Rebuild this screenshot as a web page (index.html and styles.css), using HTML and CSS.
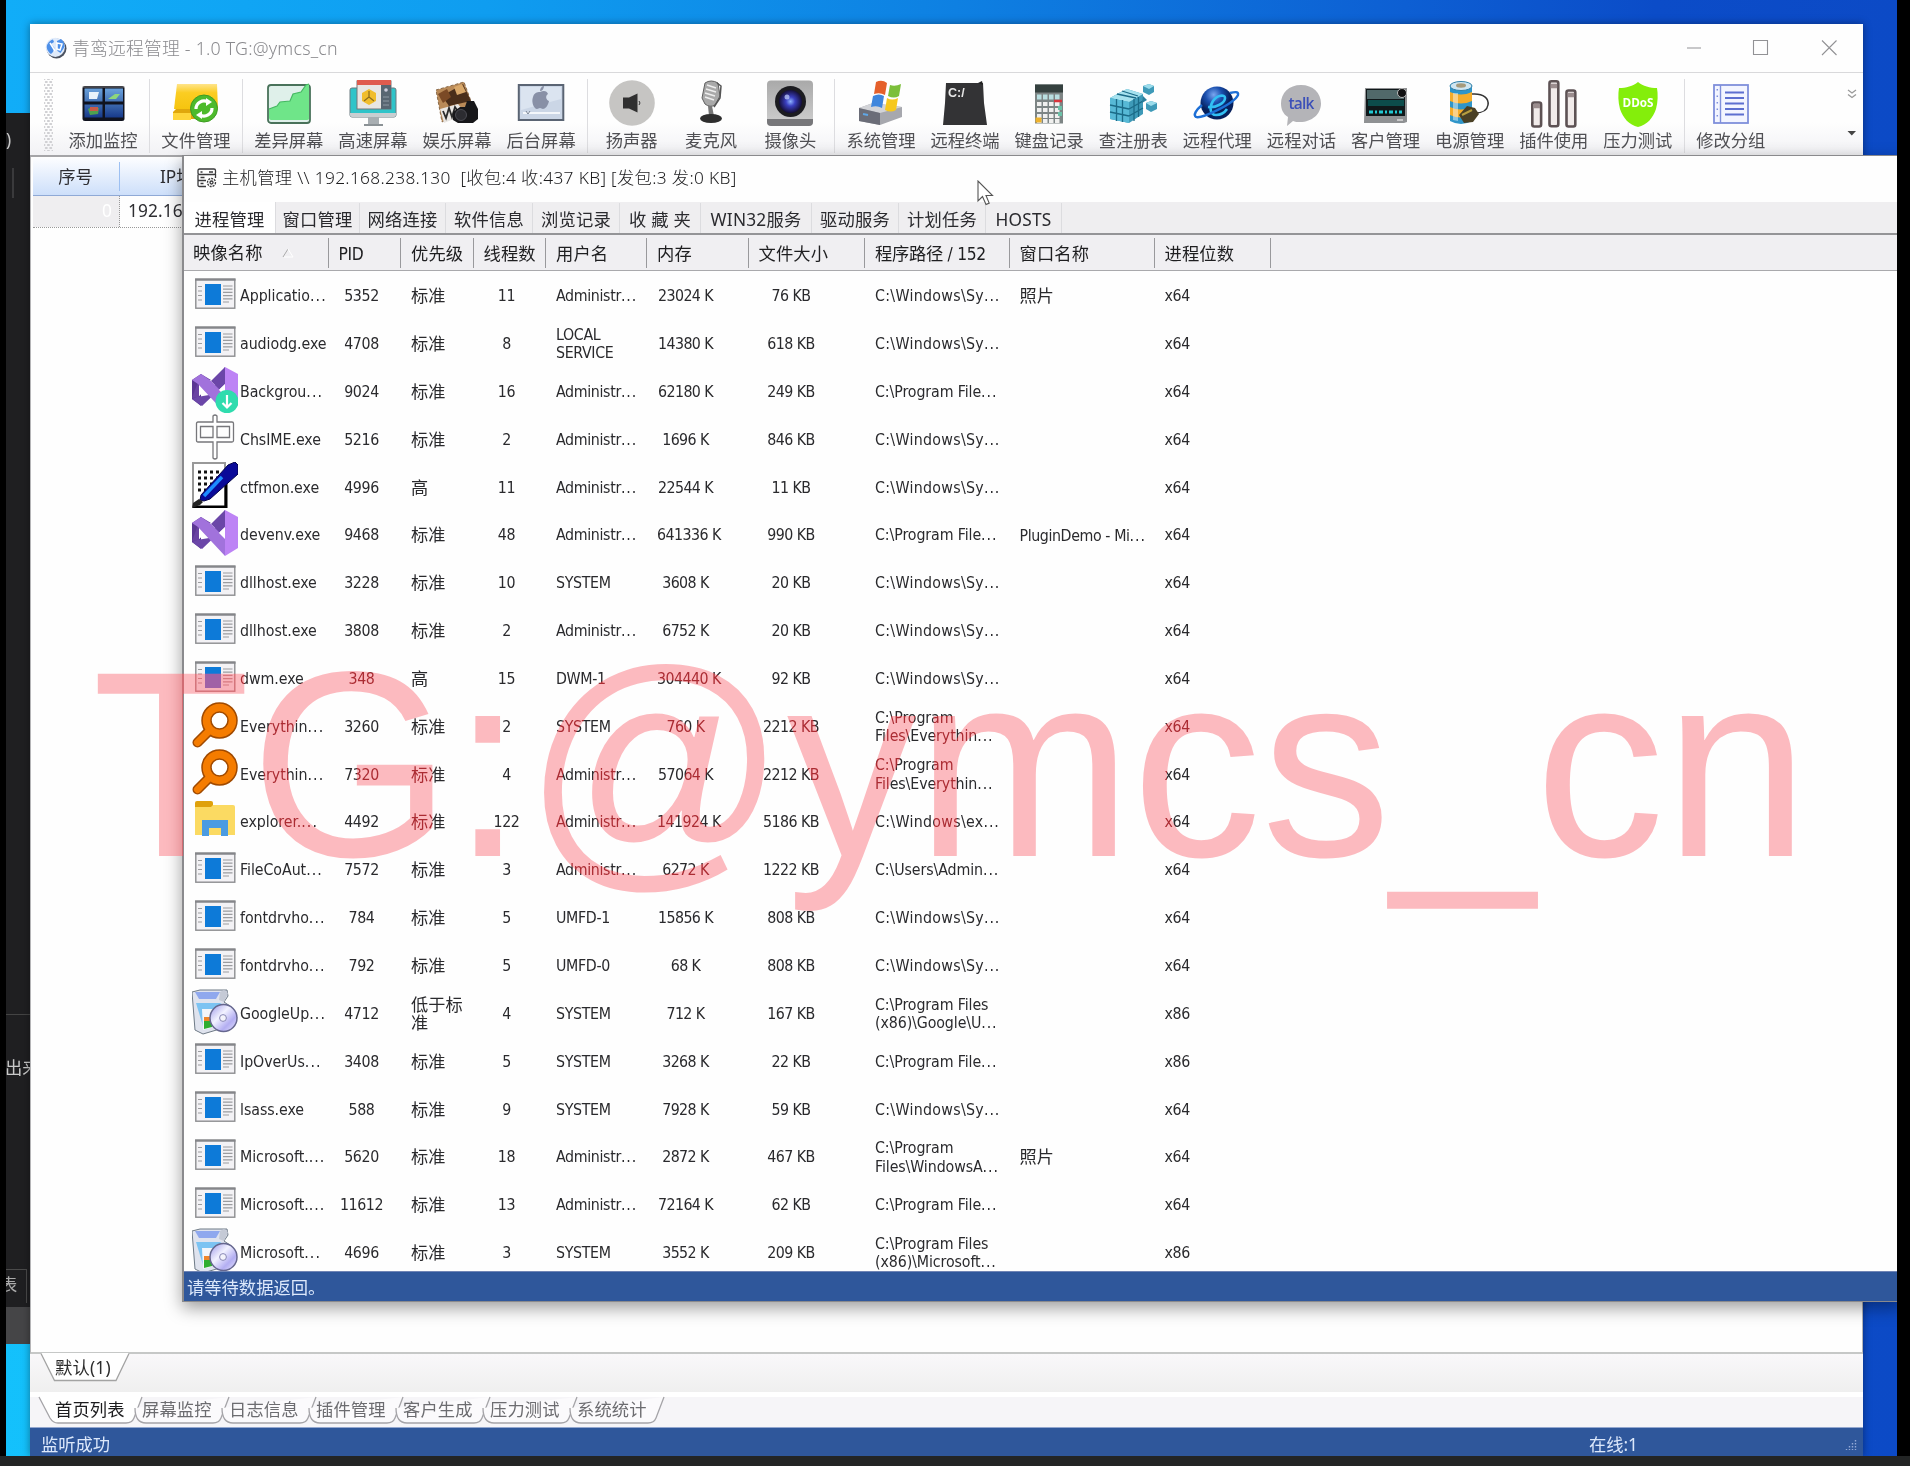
FILE: index.html
```html
<!DOCTYPE html>
<html lang="zh-CN">
<head>
<meta charset="utf-8">
<title>青鸾远程管理</title>
<link rel="stylesheet" href="styles.css">
</head>
<body>
<svg class="defs" width="0" height="0">
  <defs>
    <linearGradient id="gFolder" x1="0" y1="0" x2="0" y2="1"><stop offset="0" stop-color="#ffe48a"/><stop offset=".35" stop-color="#fbcd22"/><stop offset="1" stop-color="#f6c40f"/></linearGradient>
    <linearGradient id="gGray" x1="0" y1="0" x2="0" y2="1"><stop offset="0" stop-color="#a9a9a9"/><stop offset="1" stop-color="#cfcfcf"/></linearGradient>
    <linearGradient id="gPane" x1="0" y1="0" x2="0" y2="1"><stop offset="0" stop-color="#6aa2dc"/><stop offset="1" stop-color="#173a8a"/></linearGradient>
    <radialGradient id="gLens"><stop offset="0" stop-color="#8fb4ff"/><stop offset=".4" stop-color="#3a3fc0"/><stop offset="1" stop-color="#150f38"/></radialGradient>
    <radialGradient id="gGlobe" cx=".4" cy=".25"><stop offset="0" stop-color="#7aa7f0"/><stop offset=".5" stop-color="#1a4fae"/><stop offset="1" stop-color="#06205c"/></radialGradient>
    <linearGradient id="gDisc" x1="0" y1="0" x2="1" y2="1"><stop offset="0" stop-color="#9a94e8"/><stop offset=".4" stop-color="#f2f2ff"/><stop offset=".7" stop-color="#b3aef2"/><stop offset="1" stop-color="#e8e6ff"/></linearGradient>
    <symbol id="app" viewBox="0 0 46 46">
      <rect x="3.800" y="8.200" width="39" height="29" fill="#f3f2f5" stroke="#8c8d90" stroke-width="1.400"/>
      <path d="M3 8.600h40.500" stroke="#85868a" stroke-width="2.400"/>
      <rect x="13" y="13" width="16" height="21" fill="#0d7ad8"/>
      <path d="M6 15.500h4M6 20h4M6 24.500h4M6 29h4M31 15h9.500M31 18.200h9.500M31 21.400h9.500M31 24.600h9.500M31 27.800h9.500M31 31h6" stroke="#9b9c9f" stroke-width="1.200"/>
    </symbol>
    <symbol id="vs" viewBox="0 0 46 46">
      <path d="M0 13l9-6v32l-9-7z" fill="#5b3694"/>
      <path d="M9 7L19 13 7 17v13L0 31z" fill="#6a42a3"/>
      <path d="M7 17v12l6-6z" fill="#fff"/>
      <path d="M17 28L33 0v17L10 39 0 32l5-2z" fill="#6b46a8"/>
      <path d="M7 17v12l6-6z" fill="#fff"/>
      <path d="M19 14L33 0v17l-6 5z" fill="#6b46a8"/>
      <path d="M9 7l10 7 14 14v18L6 17l-6-4z" fill="#a172dc"/>
      <path d="M33 0l13 7v31l-13 8z" fill="#bd83f5"/>
      <path d="M33 17v12l-6-6z" fill="#fff"/>
    </symbol>
    <symbol id="vsdl" viewBox="0 0 46 46">
      <use href="#vs"/><circle cx="35" cy="34.500" r="11.500" fill="#2fdcae"/>
      <path d="M35 28v12M30.500 36l4.500 4.500 4.500-4.500" fill="none" stroke="#fff" stroke-width="2.200"/>
    </symbol>
    <symbol id="ime" viewBox="0 0 46 46">
      <path d="M21 2q2-2 4 0v6h15q1.500 0 1.500 1.500v17q0 1.500-1.500 1.500H25v16q-2 2-4 0V28H6q-1.500 0-1.500-1.500v-17Q4.500 8 6 8h15zM8.500 12.500v11H21v-11zM25 12.500v11h12.500v-11z" fill="#fff" stroke="#77777b" stroke-width="1.300" fill-rule="evenodd"/>
    </symbol>
    <symbol id="ctf" viewBox="0 0 46 46">
      <path d="M1 1h32v44H1z" fill="#fff" stroke="#999" stroke-width="2"/>
      <path d="M1 45h33V8" fill="none" stroke="#000" stroke-width="3"/>
      <path d="M6 10h22M6 16h20M6 22h14M6 28h8" stroke="#111" stroke-width="3" stroke-dasharray="3 3"/>
      <path d="M8 38L9 33 36 3l7-3 3 3v9L18 37l-6 2z" fill="#0a0a98" stroke="#04044a" stroke-width="1"/>
      <path d="M12 34L30 15" stroke="#1d8dff" stroke-width="3.500"/>
      <path d="M0 46l1-5 6-4 4 3-3 3z" fill="#222"/>
    </symbol>
    <symbol id="find" viewBox="0 0 46 46">
      <path d="M5.500 40.500L18 28" stroke="#a04a00" stroke-width="10" stroke-linecap="round"/>
      <circle cx="27.500" cy="18.500" r="13" fill="#fff" stroke="#a04a00" stroke-width="10.500"/>
      <path d="M5.500 40.500L18 28" stroke="#f57c00" stroke-width="7" stroke-linecap="round"/>
      <circle cx="27.500" cy="18.500" r="13" fill="none" stroke="#f57c00" stroke-width="7.500"/>
    </symbol>
    <symbol id="folder" viewBox="0 0 46 46">
      <path d="M3 8h38q2 0 2 2v28H3z" fill="#fbda62"/><path d="M3 6q0-2 2-2h14q2 0 2 2v2l-2 2H3z" fill="#dfa10c"/>
      <path d="M10 23h26v16h-7v-8H17v8h-7z" fill="#4a9be2"/>
    </symbol>
    <symbol id="setup" viewBox="0 0 46 46">
      <path d="M0 3l8-2h27l1 6-4 6 6 4v20L11 45 3 41z" fill="#dfe3ee" stroke="#6e7a86" stroke-width="1"/>
      <path d="M3 3h25l-4 7H7z" fill="#8fa8ee"/><path d="M28 3l4-2 4 3-4 9-5-2z" fill="#c5cad6"/>
      <path d="M4 14h24l5 3v20H11z" fill="#7cc3f2"/><path d="M10 20h12v18l-11 3z" fill="#f4f6fa"/>
      <path d="M12 28h8v10l-8 2z" fill="#2fae2f"/><path d="M12 28h8v4h-8z" fill="#f0862a"/>
      <circle cx="31.500" cy="29" r="13.500" fill="url(#gDisc)" stroke="#66678f" stroke-width="1.500"/>
      <circle cx="31" cy="29" r="3.400" fill="#f3f3fb" stroke="#8887b5"/>
    </symbol>
  </defs>
</svg>

<div class="desktop">
  <aside class="behind">
    <span class="b-paren">)</span>
    <i class="b-bar"></i>
    <span class="b-text">出来</span>
    <span class="b-tab">表</span>
    <i class="b-foot"></i>
  </aside>

  <section class="main-win">
    <header class="titlebar">
      <svg width="22" height="22" viewBox="0 0 22 22"><circle cx="11.500" cy="11.500" r="10" fill="#4b5260"/><circle cx="10.300" cy="10.300" r="9.600" fill="#dfeafa"/><path d="M2 8c2-4 4-5 6-5.500l1 2.500-3 2 3.500 4-1.500 4-2 2c-3-2-5-6-4-9zM12 4l4-2c3 2 3.500 5 3.500 8l-4 6-3-2-.5-4z" fill="#4d8fe8"/><path d="M5 6l5 8M12 6l5 1-2 6-3-1z" fill="none" stroke="#fff" stroke-width="1.500"/></svg>
      <h1>青鸾远程管理 - 1.0 TG:@ymcs_cn</h1>
      <svg class="winbtns" width="160" height="20" viewBox="0 0 160 20"><path d="M4 10h14M70.500 2.500h14v14h-14zM139 2.500l14.500 14.500M153.500 2.500L139 17" fill="none" stroke="#929295" stroke-width="1.100"/></svg>
    </header>

    <nav class="toolbar">
      <i class="grip"></i>
      <div class="tool"><svg viewBox="0 0 46 46"><rect x="2.500" y="6" width="42" height="35" rx="2.500" fill="#10131f"/><path d="M2.500 7h42" stroke="#777" stroke-width="1"/><path d="M4.500 8.500h18v13h-18zM25 8.500h18v13H25zM4.500 24.500h18v13h-18zM25 24.500h18v13H25z" fill="url(#gPane)"/><path d="M9 12h10l-2 7H9z" fill="#e8f2fb"/><path d="M28 19l7-5 5 0-4 5z" fill="#8ed67c"/><path d="M8 29l4-2 7 1-1 6-8 1z" fill="#4fa04e"/><path d="M10 27h8v4h-8z" fill="#c85b48"/></svg>添加监控</div>
      <i class="sep"></i>
      <div class="tool"><svg viewBox="0 0 46 46"><path d="M4 4h40l1 25H1z" fill="url(#gFolder)"/><path d="M0 32l3-3h26v10H0z" fill="#e0a70c"/><path d="M0 33h18v7H0z" fill="#ffd53a"/><circle cx="31" cy="28.500" r="13.500" fill="#4dba2c" stroke="#3d9c22"/><path d="M23 29a8 8 0 0 1 12-7M39 28a8 8 0 0 1-12 7" fill="none" stroke="#fff" stroke-width="3.200"/><path d="M33 18l6 4-6 4zM29 31l-6 4 6 4z" fill="#fff"/></svg>文件管理</div>
      <i class="sep"></i>
      <div class="tool"><svg viewBox="0 0 46 46"><rect x="2" y="5" width="42" height="38" rx="3" fill="#dff0ea" stroke="#49725a" stroke-width="1.800"/><path d="M3 29l8-3 3-4 10-1 3-7 8-2 5-7 3-1v35q0 1-2 1H5q-2 0-2-2z" fill="#6fe589"/><path d="M3 29l8-3 3-4 10-1 3-7 8-2 5-7 3-1" fill="none" stroke="#46b963" stroke-width="1.200"/></svg>差异屏幕</div>
      <div class="tool"><svg viewBox="0 0 46 46"><rect x="0" y="8" width="46" height="29" rx="2" fill="#2fc4c9" stroke="#6b7b80"/><path d="M0 33h46v2q0 2-2 2H2q-2 0-2-2z" fill="#c9ced1"/><path d="M18 37h11v7H18z" fill="#a8aeb2"/><path d="M14 45h19" stroke="#8b9296" stroke-width="2"/><rect x="7" y="1" width="34" height="28" fill="#e8e6e3" stroke="#72767a"/><rect x="7" y="0" width="34" height="5" fill="#df5b4e"/><path d="M31 5h10v24H31z" fill="#586672"/><circle cx="36" cy="10" r="1.800" fill="#ccd"/><path d="M33 17h6M33 21h6M33 25h6" stroke="#8d99a3"/><path d="M19 9l7 4v8l-7 4-7-4v-8z" fill="#f0bd2d"/><path d="M19 11v6l-5 4M19 17l5 4" fill="none" stroke="#8b6c1c" stroke-width="1.200"/></svg>高速屏幕</div>
      <div class="tool"><svg viewBox="0 0 46 46"><path d="M2 10l28-8 8 22-30 18z" fill="#b98a58" stroke="#8a6a4a" stroke-width="1" stroke-dasharray="3 2"/><path d="M8 16l21-12 8 17-22 5z" fill="#4a2e1a"/><path d="M20 7l8-3 4 8-9 3z" fill="#d9a86a"/><path d="M4 14l9-5 4 8-8 6z" fill="#7b4a26"/><path d="M6 29l18-5 8 10-22 9z" fill="#e9e6e2"/><path d="M9 31l3 7 3-10 3 9 3-10 4 6" fill="none" stroke="#2a2a2a" stroke-width="1.800"/><path d="M19 32l7-5h5l2-6h7l4 8v10l-5 4H24l-5-3z" fill="#17171a"/><circle cx="27" cy="35" r="5.500" fill="#2c2c31" stroke="#4b4b52"/></svg>娱乐屏幕</div>
      <div class="tool"><svg viewBox="0 0 46 46"><rect x="0.800" y="5" width="44.500" height="35" fill="#cbd6e6" stroke="#5a6473" stroke-width="2"/><path d="M3 7h40v12L3 30z" fill="#dbe4f0"/><path d="M22 12c4-2 7-1 8 2-3 2-2 6 1 7-1 5-4 8-6 8l-3-1-3 1c-3 0-6-7-4-12 1-4 4-5 7-5zM22 11c0-3 2-5 4-5 0 3-2 5-4 5z" fill="#8890a6"/><path d="M5 33h37" stroke="#f4f7fb" stroke-width="2"/><path d="M8 31l2 3 2-3" fill="none" stroke="#7a8494"/></svg>后台屏幕</div>
      <i class="sep"></i>
      <div class="tool narrow"><svg viewBox="0 0 46 46"><circle cx="23" cy="23" r="22.800" fill="#c6c5c3"/><path d="M14 17.500h6l8.500-4v19l-8.500-4h-6z" fill="#303030"/><path d="M30 21q2 2 0 4" stroke="#333" fill="none"/></svg>扬声器</div>
      <div class="tool narrow"><svg viewBox="0 0 46 46"><path d="M17 3q6-4 13 0l2 13-5 9q-5 3-10-1l-3-6z" fill="#a9a9a9" stroke="#5f5f5f"/><path d="M19 5l9 3M18 9l10 3M17 13l10 3M17 17l9 3" stroke="#eee" stroke-width="1.500"/><path d="M29 3l4 3-1 12-6 9" stroke="#555" fill="none" stroke-width="1.500"/><path d="M20 26h4l2 10h-5z" fill="#777"/><ellipse cx="23" cy="38.500" rx="11" ry="4.500" fill="#2e2e2e"/></svg>麦克风</div>
      <div class="tool narrow"><svg viewBox="0 0 46 46"><rect x="0" y="0.500" width="46" height="45" rx="4" fill="url(#gGray)"/><path d="M0 39h46v3q0 4-4 4H4q-4 0-4-4z" fill="#77777a"/><circle cx="23.500" cy="21.500" r="15.500" fill="#1c1c20"/><circle cx="23.500" cy="21.500" r="11.500" fill="url(#gLens)"/><circle cx="20" cy="17" r="2.500" fill="#c8d6ff" opacity=".7"/></svg>摄像头</div>
      <i class="sep"></i>
      <div class="tool"><svg viewBox="0 0 46 46"><path d="M1 28l14-5 29 4v10L22 45 1 41z" fill="#a7a8ae"/><path d="M1 28l14-5 29 4-22 6z" fill="#d3d4d8"/><path d="M1 28l21 5v12L1 41z" fill="#6b6d78"/><path d="M5 34l5 1" stroke="#5fa7e6" stroke-width="2"/><path d="M18 2q6-3 11 1l-2 12q-5-3-11-1z" fill="#e5602b"/><path d="M32 5q5 2 11-1l-2 12q-5 3-11 0z" fill="#7cbf3a"/><path d="M15 16q6-3 11 0l-2 12q-5-3-11-1z" fill="#3f86dd"/><path d="M29 18q5 3 11 0l-2 12q-5 3-11 0z" fill="#f6c81e"/></svg>系统管理</div>
      <div class="tool"><svg viewBox="0 0 46 46"><path d="M4 3h37l1 20 3 22H1l2-22z" fill="#333335"/><path d="M36 3l4-2 1 4z" fill="#222"/><text x="6" y="17" font-family="Liberation Sans, sans-serif" font-weight="bold" font-size="12.500" fill="#e8e8e8">C:/</text></svg>远程终端</div>
      <div class="tool"><svg viewBox="0 0 46 46"><rect x="9" y="4.500" width="28" height="39" fill="#7d8585"/><rect x="9" y="4.500" width="28" height="8" fill="#35413f"/><path d="M11 17h24" stroke="#b9dfe1" stroke-width="5" stroke-dasharray="4.500 1.500"/><path d="M11 24h24M11 30h24M11 36h24M11 41h24" stroke="#f0f0ef" stroke-width="4" stroke-dasharray="4.500 1.500"/><path d="M28 21h8" stroke="#d8343c" stroke-width="2.500"/><path d="M32 28h4M32 34h4" stroke="#6cc1a8" stroke-width="4"/><path d="M9.500 40h6" stroke="#efb22c" stroke-width="5"/></svg>键盘记录</div>
      <div class="tool"><svg viewBox="0 0 46 46"><path d="M0 18l9-5 8-4 16 5v20l-14 9-19-4z" fill="#3e9ab8"/><path d="M0 18l9-5 8-4 16 5-14 8z" fill="#a5e2ef"/><path d="M0 18l19 4v21L0 39z" fill="#57b9d6"/><path d="M6.500 19v22M12.500 20v22M0 25l19 4M0 32l19 4M24 19v22M28.500 17v20M19 29l14-8M19 36l14-8M7 14l19 4M12 11l16 5" stroke="#1b6b88" stroke-width="1.300"/><path d="M33 6l6-2 5 2v6l-5 3-6-3zM36 23l5-2 6 2v6l-6 3-5-3z" fill="#3e9ab8"/><path d="M33 6l6-2 5 2-5 3zM36 23l5-2 6 2-6 3z" fill="#9bdcec"/><path d="M33 16l4 4-5 3z" fill="#2b7f9d"/></svg>查注册表</div>
      <div class="tool"><svg viewBox="0 0 46 46"><circle cx="23" cy="23" r="16.500" fill="url(#gGlobe)"/><path d="M14 27c8 1 17-4 17-9 0-4-8-3-12 3s-3 14 3 14 9-3 11-6" fill="none" stroke="#32c0f4" stroke-width="2.600"/><path d="M8 25c-6 5-9 10-6 12 5 2 38-13 42-22 1-4-4-3-8-2" fill="none" stroke="#1d6fd6" stroke-width="2.400"/></svg>远程代理</div>
      <div class="tool"><svg viewBox="0 0 46 46"><path d="M23 5c12 0 20 8 20 18.500S34 42 22 42c-3 0-5 0-7-1l-6 5 1-9C5 34 3 29 3 23.500 3 13 11 5 23 5z" fill="#b4b4b8"/><text x="23" y="29" text-anchor="middle" font-family="Open Sans, sans-serif" font-weight="600" font-size="15.500" letter-spacing="-.8" fill="#3c50b8">talk</text></svg>远程对话</div>
      <div class="tool"><svg viewBox="0 0 46 46"><path d="M2 8h42v34l-3 1H1z" fill="#8f9193"/><rect x="3" y="9" width="39" height="27" fill="#10181a"/><path d="M4 10h37v9H4z" fill="#51696a"/><path d="M5 20h36v6H5z" fill="#0c4c4b"/><path d="M6 32h33" stroke="#22c9d2" stroke-width="3" stroke-dasharray="4 2 2 2"/><circle cx="39" cy="13" r="4.500" fill="#111" stroke="#b9b9b9"/><path d="M34 40h6" stroke="#ddd" stroke-width="1.500"/></svg>客户管理</div>
      <div class="tool"><svg viewBox="0 0 46 46"><path d="M3 5h22v36q-11 6-22 0z" fill="#2f95c9"/><path d="M3 12q11 5 22 0v9q-11 5-22 0zM3 27q11 5 22 0v8q-11 5-22 0z" fill="#f6ac28"/><path d="M6 13h5v28l-5-1z" fill="#fff" opacity=".45"/><ellipse cx="14" cy="6" rx="11" ry="4.500" fill="#cfe6f1" stroke="#2c7ea8"/><ellipse cx="14" cy="5.500" rx="5" ry="2.200" fill="#a59a7c"/><path d="M25 14c12-1 17 5 16 11s-7 8-13 8" fill="none" stroke="#333" stroke-width="1.500"/><path d="M12 35l8-9 8 2 4 6-6 8-9 1z" fill="#4a4025"/><path d="M15 35l10-5" stroke="#b79e3f" stroke-width="2"/></svg>电源管理</div>
      <div class="tool"><svg viewBox="0 0 46 46"><g fill="#f1ebea" stroke="#5d5254" stroke-width="2.600"><rect x="1.300" y="22.500" width="8.800" height="24" rx="2"/><rect x="18.500" y="1.300" width="8.800" height="45" rx="2"/><rect x="35.500" y="10.500" width="8.800" height="36" rx="2"/></g><path d="M2.500 26h6.500M19.700 6h6.500M36.700 15h6.500" stroke="#9b8d8e" stroke-width="4.500"/></svg>插件使用</div>
      <div class="tool"><svg viewBox="0 0 46 46"><path d="M23 2c5 4 12 6 19 6 1 6 1 14-1 21-3 9-9 16-18 18C14 45 8 38 5 29 3 22 3 14 4 8c7 0 14-2 19-6z" fill="#84ee0b"/><text x="23" y="27" text-anchor="middle" font-family="Open Sans, sans-serif" font-weight="bold" font-size="13" textLength="31" lengthAdjust="spacingAndGlyphs" fill="#fff">DDoS</text></svg>压力测试</div>
      <i class="sep"></i>
      <div class="tool"><svg viewBox="0 0 46 46"><rect x="6" y="5" width="34" height="38" fill="#f3f5ff" stroke="#7f8fdb" stroke-width="1.800"/><path d="M12.500 5v38" stroke="#7f8fdb" stroke-width="1.400"/><path d="M9.300 9v31" stroke="#7f8fdb" stroke-width="1.500" stroke-dasharray="1.500 5"/><path d="M17 12.500h19M17 18h19M17 23.500h19M17 29h19M17 34.500h19" stroke="#5d6fd0" stroke-width="1.900"/></svg>修改分组</div>
      <svg class="more" width="12" height="56" viewBox="0 0 12 56"><path d="M2 2l4 3 4-3M2 6.500l4 3 4-3" fill="none" stroke="#999" stroke-width="1.300"/><path d="M1.500 43h8.500l-4.200 4.600z" fill="#444"/></svg>
    </nav>

    <div class="hosts">
      <div class="hosts-head"><span>序号</span><span>IP地址</span></div>
      <div class="hosts-row"><span>0</span><span>192.168.238.130</span></div>
    </div>

    <div class="groups">
      <div class="group-tab"><svg width="92" height="30" viewBox="0 0 92 30"><path d="M1 0l13.500 27.500H76L89 0" fill="#fff"/><path d="M1 .5L14.500 27.500H76L89 .5" fill="none" stroke="#a3a3a3" stroke-width="1.300"/></svg><span>默认(1)</span></div>
    </div>
    <div class="views">
      <div class="view"><svg viewBox="0 0 108 32"><path d="M1 1L12 22q3 5 8 5h68q6 0 8-5L104 1"/></svg><span>首页列表</span></div>
      <div class="view"><svg viewBox="0 0 108 32"><path d="M10 12q0 15 11 15h67q6 0 8-5L104 1"/></svg><span>屏幕监控</span></div>
      <div class="view"><svg viewBox="0 0 108 32"><path d="M10 12q0 15 11 15h67q6 0 8-5L104 1"/></svg><span>日志信息</span></div>
      <div class="view"><svg viewBox="0 0 108 32"><path d="M10 12q0 15 11 15h67q6 0 8-5L104 1"/></svg><span>插件管理</span></div>
      <div class="view"><svg viewBox="0 0 108 32"><path d="M10 12q0 15 11 15h67q6 0 8-5L104 1"/></svg><span>客户生成</span></div>
      <div class="view"><svg viewBox="0 0 108 32"><path d="M10 12q0 15 11 15h67q6 0 8-5L104 1"/></svg><span>压力测试</span></div>
      <div class="view"><svg viewBox="0 0 108 32"><path d="M10 12q0 15 11 15h67q6 0 8-5L104 1"/></svg><span>系统统计</span></div>
    </div>
    <footer class="status"><span>监听成功</span><span class="online">在线:1</span>
      <svg width="12" height="12" viewBox="0 0 12 12"><path d="M10.500 1v10M7.500 4v7M4.500 7v4M1.500 10v1" stroke="#93a9d6" stroke-width="1.400" stroke-dasharray="1.600 1.400"/></svg>
    </footer>
  </section>

  <section class="host-win">
    <header class="host-title">
      <svg width="20" height="20" viewBox="0 0 20 20"><g fill="none" stroke="#3a3a3c" stroke-width="1.300"><rect x="1" y="1" width="17.500" height="5.500" rx="1.500"/><path d="M9 12.500H2.500Q1 12.500 1 11V6.500M18.500 6v4M9 18.500H2.500Q1 18.500 1 17v-6M3.500 4h2M12 4h4M3.500 9.500h4M3.500 15.500h3"/><circle cx="14.500" cy="14.500" r="4" stroke-dasharray="2 1"/><circle cx="14.500" cy="14.500" r="1.500"/></g></svg>
      <h2>主机管理 \\ 192.168.238.130&nbsp; [收包:4 收:437 KB] [发包:3 发:0 KB]</h2>
    </header>
    <nav class="tabs">
      <span class="w92 on">进程管理</span><span class="w84">窗口管理</span><span class="w86">网络连接</span><span class="w87">软件信息</span><span class="w87">浏览记录</span><span class="w81">收 藏 夹</span><span class="w111">WIN32服务</span><span class="w87">驱动服务</span><span class="w87">计划任务</span><span class="w76">HOSTS</span>
    </nav>
    <div class="thead">
      <span>映像名称<svg width="12" height="12" viewBox="0 0 12 12"><path d="M1 10L6 2" stroke="#aaa"/><path d="M6 2l5 8H2" fill="none" stroke="#fff"/></svg></span><span>PID</span><span>优先级</span><span>线程数</span><span>用户名</span><span>内存</span><span>文件大小</span><span>程序路径 / 152</span><span>窗口名称</span><span>进程位数</span>
    </div>
    <div class="tbody">
      <div class="tr"><div class="n"><svg><use href="#app"/></svg><p>Applicatio<u>...</u></p></div><div class="c">5352</div><div>标准</div><div class="c">11</div><div>Administr<u>...</u></div><div class="m"><b>23024 K</b></div><div class="s">76 KB</div><div class="w">C:\Windows\Sy<u>...</u></div><div>照片</div><div>x64</div></div>
      <div class="tr"><div class="n"><svg><use href="#app"/></svg><p>audiodg.exe</p></div><div class="c">4708</div><div>标准</div><div class="c">8</div><div>LOCAL<br>SERVICE</div><div class="m"><b>14380 K</b></div><div class="s">618 KB</div><div class="w">C:\Windows\Sy<u>...</u></div><div></div><div>x64</div></div>
      <div class="tr"><div class="n"><svg><use href="#vsdl"/></svg><p>Backgrou<u>...</u></p></div><div class="c">9024</div><div>标准</div><div class="c">16</div><div>Administr<u>...</u></div><div class="m"><b>62180 K</b></div><div class="s">249 KB</div><div>C:\Program File<u>...</u></div><div></div><div>x64</div></div>
      <div class="tr"><div class="n"><svg><use href="#ime"/></svg><p>ChsIME.exe</p></div><div class="c">5216</div><div>标准</div><div class="c">2</div><div>Administr<u>...</u></div><div class="m"><b>1696 K</b></div><div class="s">846 KB</div><div class="w">C:\Windows\Sy<u>...</u></div><div></div><div>x64</div></div>
      <div class="tr"><div class="n"><svg><use href="#ctf"/></svg><p>ctfmon.exe</p></div><div class="c">4996</div><div>高</div><div class="c">11</div><div>Administr<u>...</u></div><div class="m"><b>22544 K</b></div><div class="s">11 KB</div><div class="w">C:\Windows\Sy<u>...</u></div><div></div><div>x64</div></div>
      <div class="tr"><div class="n"><svg><use href="#vs"/></svg><p>devenv.exe</p></div><div class="c">9468</div><div>标准</div><div class="c">48</div><div>Administr<u>...</u></div><div class="m"><b>641336 K</b></div><div class="s">990 KB</div><div>C:\Program File<u>...</u></div><div><span class="lt">PluginDemo - Mi<u>...</u></span></div><div>x64</div></div>
      <div class="tr"><div class="n"><svg><use href="#app"/></svg><p>dllhost.exe</p></div><div class="c">3228</div><div>标准</div><div class="c">10</div><div>SYSTEM</div><div class="m"><b>3608 K</b></div><div class="s">20 KB</div><div class="w">C:\Windows\Sy<u>...</u></div><div></div><div>x64</div></div>
      <div class="tr"><div class="n"><svg><use href="#app"/></svg><p>dllhost.exe</p></div><div class="c">3808</div><div>标准</div><div class="c">2</div><div>Administr<u>...</u></div><div class="m"><b>6752 K</b></div><div class="s">20 KB</div><div class="w">C:\Windows\Sy<u>...</u></div><div></div><div>x64</div></div>
      <div class="tr"><div class="n"><svg><use href="#app"/></svg><p>dwm.exe</p></div><div class="c">348</div><div>高</div><div class="c">15</div><div>DWM-1</div><div class="m"><b>304440 K</b></div><div class="s">92 KB</div><div class="w">C:\Windows\Sy<u>...</u></div><div></div><div>x64</div></div>
      <div class="tr"><div class="n"><svg><use href="#find"/></svg><p>Everythin<u>...</u></p></div><div class="c">3260</div><div>标准</div><div class="c">2</div><div>SYSTEM</div><div class="m"><b>760 K</b></div><div class="s">2212 KB</div><div>C:\Program<br>Files\Everythin<u>...</u></div><div></div><div>x64</div></div>
      <div class="tr"><div class="n"><svg><use href="#find"/></svg><p>Everythin<u>...</u></p></div><div class="c">7320</div><div>标准</div><div class="c">4</div><div>Administr<u>...</u></div><div class="m"><b>57064 K</b></div><div class="s">2212 KB</div><div>C:\Program<br>Files\Everythin<u>...</u></div><div></div><div>x64</div></div>
      <div class="tr"><div class="n"><svg><use href="#folder"/></svg><p>explorer.<u>...</u></p></div><div class="c">4492</div><div>标准</div><div class="c">122</div><div>Administr<u>...</u></div><div class="m"><b>141924 K</b></div><div class="s">5186 KB</div><div class="w">C:\Windows\ex<u>...</u></div><div></div><div>x64</div></div>
      <div class="tr"><div class="n"><svg><use href="#app"/></svg><p>FileCoAut<u>...</u></p></div><div class="c">7572</div><div>标准</div><div class="c">3</div><div>Administr<u>...</u></div><div class="m"><b>6272 K</b></div><div class="s">1222 KB</div><div>C:\Users\Admin<u>...</u></div><div></div><div>x64</div></div>
      <div class="tr"><div class="n"><svg><use href="#app"/></svg><p>fontdrvho<u>...</u></p></div><div class="c">784</div><div>标准</div><div class="c">5</div><div>UMFD-1</div><div class="m"><b>15856 K</b></div><div class="s">808 KB</div><div class="w">C:\Windows\Sy<u>...</u></div><div></div><div>x64</div></div>
      <div class="tr"><div class="n"><svg><use href="#app"/></svg><p>fontdrvho<u>...</u></p></div><div class="c">792</div><div>标准</div><div class="c">5</div><div>UMFD-0</div><div class="m"><b>68 K</b></div><div class="s">808 KB</div><div class="w">C:\Windows\Sy<u>...</u></div><div></div><div>x64</div></div>
      <div class="tr"><div class="n"><svg><use href="#setup"/></svg><p>GoogleUp<u>...</u></p></div><div class="c">4712</div><div>低于标<br>准</div><div class="c">4</div><div>SYSTEM</div><div class="m"><b>712 K</b></div><div class="s">167 KB</div><div>C:\Program Files<br>(x86)\Google\U<u>...</u></div><div></div><div>x86</div></div>
      <div class="tr"><div class="n"><svg><use href="#app"/></svg><p>IpOverUs<u>...</u></p></div><div class="c">3408</div><div>标准</div><div class="c">5</div><div>SYSTEM</div><div class="m"><b>3268 K</b></div><div class="s">22 KB</div><div>C:\Program File<u>...</u></div><div></div><div>x86</div></div>
      <div class="tr"><div class="n"><svg><use href="#app"/></svg><p>lsass.exe</p></div><div class="c">588</div><div>标准</div><div class="c">9</div><div>SYSTEM</div><div class="m"><b>7928 K</b></div><div class="s">59 KB</div><div class="w">C:\Windows\Sy<u>...</u></div><div></div><div>x64</div></div>
      <div class="tr"><div class="n"><svg><use href="#app"/></svg><p>Microsoft.<u>...</u></p></div><div class="c">5620</div><div>标准</div><div class="c">18</div><div>Administr<u>...</u></div><div class="m"><b>2872 K</b></div><div class="s">467 KB</div><div>C:\Program<br>Files\WindowsA<u>...</u></div><div>照片</div><div>x64</div></div>
      <div class="tr"><div class="n"><svg><use href="#app"/></svg><p>Microsoft.<u>...</u></p></div><div class="c">11612</div><div>标准</div><div class="c">13</div><div>Administr<u>...</u></div><div class="m"><b>72164 K</b></div><div class="s">62 KB</div><div>C:\Program File<u>...</u></div><div></div><div>x64</div></div>
      <div class="tr"><div class="n"><svg><use href="#setup"/></svg><p>Microsoft<u>...</u></p></div><div class="c">4696</div><div>标准</div><div class="c">3</div><div>SYSTEM</div><div class="m"><b>3552 K</b></div><div class="s">209 KB</div><div>C:\Program Files<br>(x86)\Microsoft<u>...</u></div><div></div><div>x86</div></div>
    </div>
    <footer class="host-status">请等待数据返回。</footer>
  </section>

  <svg class="cursor" width="20" height="28" viewBox="0 0 20 28"><path d="M1 1v20l4.500-4.500L9 24.500l3.200-1.400L9 15.500h6.500z" fill="#fff" stroke="#555" stroke-width="1.100"/></svg>
</div>
<div class="watermark" data-label="TG:@ymcs_cn"><span>TG:@ymcs_cn</span></div>
</body>
</html>
```

FILE: styles.css
```css
* { box-sizing: border-box; }
html, body { margin: 0; height: 1466px; overflow: hidden; }
body {
  width: 1910px;
  background: #232525;
  font: 17.3px/20px "Noto Sans", "Noto Sans CJK SC", sans-serif;
  color: #2e2e32;
  position: relative;
}
h1, h2, p { margin: 0; font: inherit; white-space: nowrap; }
svg { display: block; flex: none; }
.defs { position: absolute; }

.desktop {
  position: relative;
  height: 1456px;
  border: solid #000;
  border-width: 0 13px 0 6px;
  background:
    linear-gradient(180deg, rgba(20,195,252,0) 20%, rgba(20,195,252,.9) 90%) 0 0 / 60px 100% no-repeat,
    linear-gradient(90deg, #11adf8 0, #0f9df0 480px, #0e80e2 950px, #0d5fd3 1400px, #0b4cc8 1650px, #0c4ac6 100%);
  overflow: hidden;
}

/* sliver of the dark application behind the main window */
.behind {
  position: absolute; left: 0; top: 113px; width: 24px; height: 1231px;
  background: #1f1f21; color: #c9c9c9; overflow: hidden;
}
.behind > * { position: absolute; white-space: nowrap; }
.b-paren { left: 0; top: 17px; }
.b-bar { left: 6px; top: 55px; width: 2px; height: 30px; background: #3a3a3c; }
.b-text { left: -1px; top: 945px; width: 30px; }
.b-text::before { content: ""; position: absolute; left: 0; right: 0; top: -44px; border-top: 1px solid #444; }
.b-tab { left: -7px; top: 1156px; width: 28px; height: 34px; padding-top: 5px; border: 1px solid #4a4a4a; border-bottom: 0; color: #aaa; }
.b-foot { left: 0; top: 1194px; width: 24px; height: 37px; background: #454547; }

.main-win {
  position: absolute; left: 24px; top: 24px; width: 1833px; height: 1432px;
  background: #fefefe;
  box-shadow: 0 0 8px rgba(0,0,0,.4);
  display: flex; flex-direction: column;
}
.titlebar { height: 49px; display: flex; align-items: center; gap: 5px; padding: 0 20px 1px 15px; border-bottom: 1px solid #d9d9db; color: #8a8a8e; }
.titlebar h1 { font-size: 17.8px; font-weight: 300; letter-spacing: .22px; }
.winbtns { margin-left: auto; }

.toolbar {
  height: 84px; display: flex; padding: 6px 5px 0 14px;
  background: linear-gradient(#fefefe 60%, #f2f2f5);
  border-bottom: 2px solid #a5a5a8;
  color: #505054;
}
.grip {
  width: 9px; height: 72px; margin-right: 8px;
  background:
    radial-gradient(circle, #cfcfd2 1px, transparent 1.3px) 0 0 / 4.5px 6px,
    radial-gradient(circle, #cfcfd2 1px, transparent 1.3px) 2.2px 3px / 4.5px 6px;
}
.tool { width: 84.1px; display: flex; flex-direction: column; align-items: center; gap: 5px; white-space: nowrap; padding-top: 1px; }
.tool svg { width: 46px; height: 46px; overflow: visible; }
.tool.narrow { width: 79.4px; }
.sep { width: 1px; height: 74px; margin: 0 4px 0 3.8px; background: #dddde0; }
.more { margin: 9px 0 0 auto; }

.hosts { flex: 1; padding: 1px 0 0 2px; border: 1px solid #b5b5b7; border-top: 0; border-bottom: 2px solid #c6c8c7; }
.hosts-head, .hosts-row { display: grid; grid-template-columns: 87px 1fr; width: 240px; }
.hosts-head { height: 38px; line-height: 37px; background: linear-gradient(#fcfdff, #cddffa); border-bottom: 1px solid #8fa9d6; }
.hosts-head span:first-child { text-align: center; padding-right: 1px; border-right: 1px solid #9dc0f2; height: 29px; margin-top: 4px; line-height: 29px; }
.hosts-head span + span { padding-left: 40px; }
.hosts-row { height: 32px; line-height: 30px; border-bottom: 1px dotted #999; }
.hosts-row span:first-child { background: #efeef0; color: #fff; text-align: right; padding-right: 7px; border-right: 1px dotted #999; }
.hosts-row span + span { padding-left: 8px; letter-spacing: .1px; }

.groups { height: 38px; background: linear-gradient(#f9f8fa, #efefef); display: flex; padding-left: 10px; flex: none; }
.group-tab { position: relative; width: 92px; height: 30px; margin-top: -1px; color: #2c2c2c; }
.group-tab svg { position: absolute; left: 0; top: 0; }
.group-tab span { position: relative; display: block; padding: 5px 0 0 15px; white-space: nowrap; letter-spacing: .2px; }
.views { height: 35px; background: #f6f5f8; border-top: 5px solid #fff; display: flex; padding-left: 25px; color: #6c6c70; flex: none; letter-spacing: .15px; }
.view { position: relative; width: 87px; }
.view svg { position: absolute; left: -17px; top: -1px; width: 108px; height: 32px; }
.view path { fill: #fbfafc; stroke: #a5a4a8; stroke-width: 1.3; }
.view span { position: relative; display: block; padding-top: 3px; white-space: nowrap; }
.view:first-child span { color: #1c1c1e; }
.view:first-child path { fill: #fff; }
.status { height: 29px; flex: none; background: #2f579b; border-top: 1px solid #93a7cf; color: #dce8fb; display: flex; align-items: center; padding: 6px 6px 0 11px; }
.online { margin: 0 207px 0 auto; }

.host-win {
  position: absolute; left: 176px; top: 155px; width: 1721px; height: 1147px;
  background: #fefefe; border: 1px solid #8a8a8d; border-left-width: 2px;
  box-shadow: 0 6px 16px rgba(0,0,0,.38);
  display: flex; flex-direction: column;
}
.host-title { height: 46px; display: flex; align-items: center; gap: 5px; padding: 0 0 2px 13px; color: #1c1c1e; }
.host-title h2 { font-weight: 300; letter-spacing: .33px; }
.tabs { height: 33px; flex: none; display: flex; align-items: stretch; background: #efeef0; border-bottom: 2px solid #949497; color: #2a2a2e; letter-spacing: .2px; }
.tabs span { text-align: center; white-space: nowrap; line-height: 33px; border-right: 1px solid #dcdcdf; margin-top: 1px; }
.tabs .on { background: #fff; margin-top: 0; line-height: 35px; }
.w92 { width: 92px; } .w84 { width: 84px; } .w86 { width: 86px; } .w87 { width: 87px; }
.w81 { width: 81px; } .w111 { width: 111px; } .w76 { width: 76px; }

.thead, .tr { display: grid; grid-template-columns: 144.5px 72.5px 72.5px 72.5px 101px 101.5px 116.5px 144.5px 145px 116px; white-space: nowrap; }
.thead { height: 36px; flex: none; background: #f0eff2; border-bottom: 1px solid #a9a9ac; font: condensed 17.3px/31px "DejaVu Sans Condensed", "DejaVu Sans", "Noto Sans CJK SC", sans-serif; letter-spacing: .1px; color: #1e1e20; padding-top: 3px; }
.thead span { padding-left: 10px; line-height: 32px; border-right: 1px solid #99999c; height: 30px; }
.thead span:nth-child(2), .thead span:nth-child(8) { letter-spacing: -.3px; }
.thead span:first-child { padding-left: 9px; display: flex; align-items: center; gap: 19px; }
.tbody { flex: 1; min-height: 0; overflow: hidden; padding-top: 1px; }
.tr { height: 47.85px; padding-top: 1px; align-items: center; font: condensed 15.8px/18.5px "DejaVu Sans Condensed", "DejaVu Sans", "Noto Sans CJK SC", sans-serif; letter-spacing: -.35px; color: #2a2a2d; }
.tr > div { padding-left: 10px; }
.tr u { text-decoration: none; letter-spacing: .9px; }
.tr > div:nth-child(3), .tr > div:nth-child(9) { font-size: 17.2px; letter-spacing: 0; }
.tr > div:nth-child(8) { letter-spacing: -.1px; }
.tr .lt { font-size: 15.8px; letter-spacing: -.4px; }
.tr > .w:nth-child(8) { letter-spacing: .3px; }
.tr > .n { display: flex; align-items: center; gap: 2px; padding-left: 8px; letter-spacing: -.05px; }
.n u { letter-spacing: 1.1px; }
.n svg { width: 46px; height: 46px; margin-top: -5px; }
.tr > .c { padding-left: 10px; width: 56px; text-align: center; letter-spacing: -.4px; }
.m b { font-weight: normal; display: inline-block; min-width: 57px; text-align: center; }
.tr > .m, .tr > .s { letter-spacing: -.55px; }
.tr > .s { width: 75px; text-align: center; }
.host-status { height: 30px; flex: none; background: #2f579b; border-top: 1px solid #6f84b5; color: #dce8fb; padding: 6px 0 0 3px; }

.cursor { position: absolute; left: 971px; top: 180px; }

/* translucent label; the second pass lifts the red channel over dark text */
.watermark, .watermark span, .watermark::after {
  position: absolute; left: 0; top: 0;
  font: 265px/300px "Liberation Sans", Arial, sans-serif;
  white-space: nowrap;
}
.watermark { left: 92px; top: 614px; }
.watermark span, .watermark::after { transform: scaleX(.9775); transform-origin: 0 0; }
.watermark span { color: rgba(243, 50, 65, .33); }
.watermark::after { content: attr(data-label); color: rgb(110, 0, 0); mix-blend-mode: screen; }
```
